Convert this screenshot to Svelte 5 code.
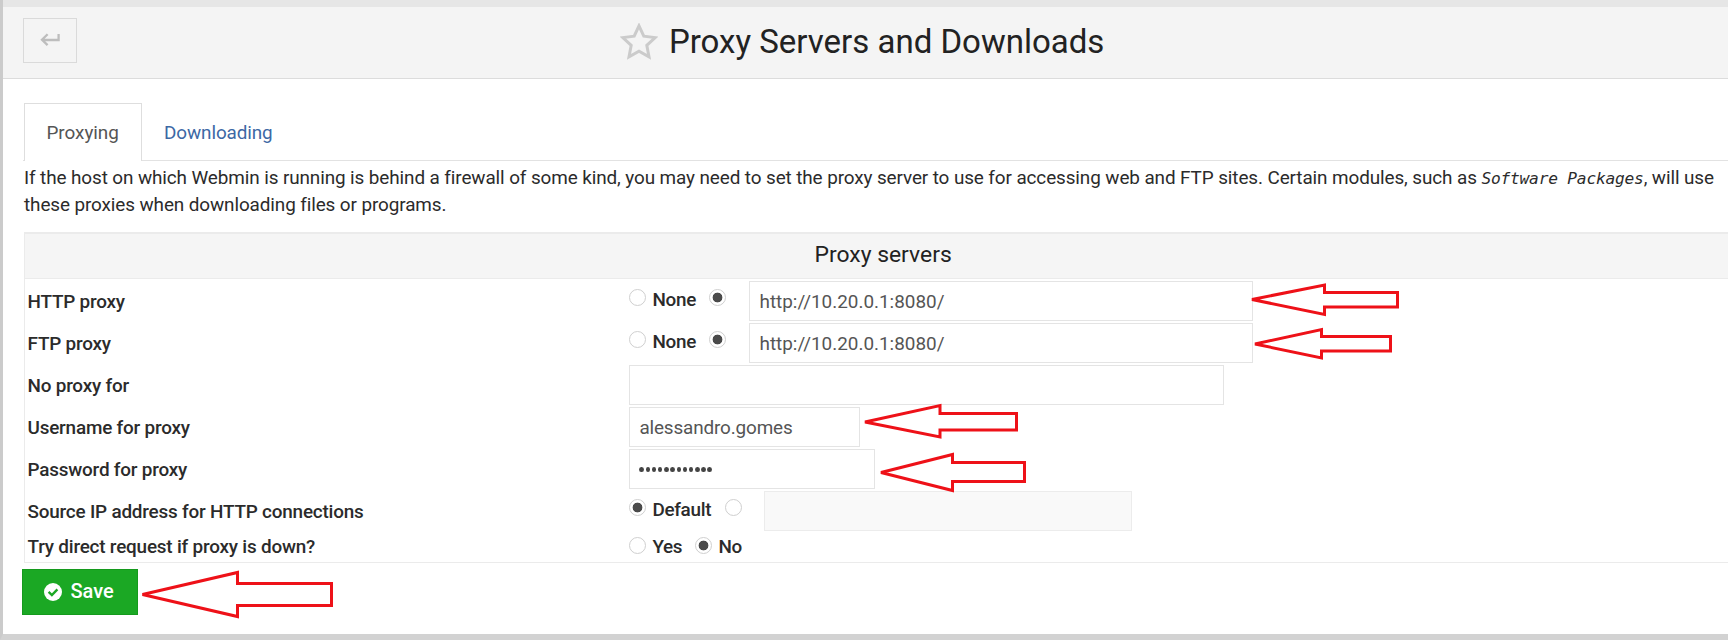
<script>
  const arrows = [
    { tip: [1252, 299.5], head: 1324.5, top: 285, bottom: 314.5, shaft: [292.5, 307], end: 1397.5 },
    { tip: [1255, 344], head: 1321.5, top: 329.5, bottom: 358, shaft: [336.5, 351], end: 1390.5 },
    { tip: [865, 422], head: 940, top: 405.5, bottom: 437, shaft: [413.5, 430], end: 1016.5 },
    { tip: [881, 472.5], head: 952.5, top: 454.5, bottom: 490.5, shaft: [462.5, 481.5], end: 1024.5 },
    { tip: [142.5, 594.5], head: 237.5, top: 572.5, bottom: 616.5, shaft: [583.5, 605.5], end: 331.5 }
  ];
  const outline = (a) =>
    `M${a.tip[0]} ${a.tip[1]}L${a.head} ${a.top}V${a.shaft[0]}H${a.end}V${a.shaft[1]}H${a.head}V${a.bottom}Z`;
  let http = $state('set');
  let ftp = $state('set');
  let source = $state('default');
  let direct = $state('no');
</script>

{#snippet radio(on, pick, label)}
  <button class="radio" class:on aria-label={label} onclick={pick}></button>
{/snippet}

<div class="page">
  <header>
    <button class="back" aria-label="Back">
      <svg width="20" height="13" viewBox="0 0 20 13"><path d="M18.6 1V7H3M7.6 1.2L2 6.8L7.6 12.2" fill="none" stroke="#bdbdbd" stroke-width="2.3" /></svg>
    </button>
    <h1>
      <svg width="38" height="37" viewBox="0 0 38 37"><path d="M19 2.8L23.8 13.2L35.2 14.6L26.8 22.4L29 33.8L19 28.2L9 33.8L11.2 22.4L2.8 14.6L14.2 13.2Z" fill="none" stroke="#cbcbcb" stroke-width="3" /></svg>
      <span>Proxy Servers and Downloads</span>
    </h1>
  </header>

  <main>
    <nav>
      <a class="tab active" href="#proxying"><span>Proxying</span></a>
      <a class="tab" href="#downloading"><span>Downloading</span></a>
    </nav>
    <p><span class="l1">If the host on which Webmin is running is behind a firewall of some kind, you may need to set the proxy server to use for accessing web and FTP sites. Certain modules, such as <em>Software Packages</em>, will use</span><br /><span class="l2">these proxies when downloading files or programs.</span></p>

    <section>
      <h2><span>Proxy servers</span></h2>
      <div class="row">
        <span class="label">HTTP proxy</span>
        {@render radio(http === 'none', () => (http = 'none'), 'None')}
        <span class="opt none">None</span>
        {@render radio(http === 'set', () => (http = 'set'), 'Address')}
        <div class="field url"><span>http://10.20.0.1:8080/</span></div>
      </div>
      <div class="row">
        <span class="label">FTP proxy</span>
        {@render radio(ftp === 'none', () => (ftp = 'none'), 'None')}
        <span class="opt none">None</span>
        {@render radio(ftp === 'set', () => (ftp = 'set'), 'Address')}
        <div class="field url"><span>http://10.20.0.1:8080/</span></div>
      </div>
      <div class="row">
        <span class="label">No proxy for</span>
        <div class="field wide"></div>
      </div>
      <div class="row">
        <span class="label">Username for proxy</span>
        <div class="field user"><span>alessandro.gomes</span></div>
      </div>
      <div class="row">
        <span class="label">Password for proxy</span>
        <div class="field pass">{#each Array(12) as _}<i></i>{/each}</div>
      </div>
      <div class="row">
        <span class="label">Source IP address for HTTP connections</span>
        {@render radio(source === 'default', () => (source = 'default'), 'Default')}
        <span class="opt default">Default</span>
        {@render radio(source === 'ip', () => (source = 'ip'), 'Address')}
        <div class="field disabled"></div>
      </div>
      <div class="row last">
        <span class="label">Try direct request if proxy is down?</span>
        {@render radio(direct === 'yes', () => (direct = 'yes'), 'Yes')}
        <span class="opt yes">Yes</span>
        {@render radio(direct === 'no', () => (direct = 'no'), 'No')}
        <span class="opt">No</span>
      </div>
    </section>

    <button class="save">
      <svg width="18" height="18" viewBox="0 0 18 18"><circle cx="9" cy="9" r="9" fill="#fff" /><path d="M4.6 8.8L7.9 12L13.4 6.4" fill="none" stroke="#1ba824" stroke-width="2.4" /></svg>
      <span>Save</span>
    </button>
  </main>

  <svg class="marks" width="1728" height="640" viewBox="0 0 1728 640">
    {#each arrows as a}<path d={outline(a)} fill="none" stroke="#ee1118" stroke-width="3" />{/each}
  </svg>
</div>

<style>
  :global(body) { background: #d3d3d3; overflow: hidden; }
  .page { position: relative; box-sizing: border-box; width: 1728px; height: 640px; border-left: 3px solid #cbcbcb; border-bottom: 6px solid #d2d2d2; background: #fff; font: 18.9px/27.5px Roboto, sans-serif; color: #2b2b2b; }
  button { padding: 0; border: 0; background: none; font: inherit; }
  header { box-sizing: border-box; height: 79px; border-top: 7px solid #e6e6e6; border-bottom: 1px solid #dcdcdc; background: #f4f4f4; display: flex; align-items: flex-start; }
  .back { box-sizing: border-box; width: 54px; height: 45px; margin: 11px 0 0 20.4px; border: 1px solid #dadada; display: flex; align-items: center; justify-content: center; }
  .back svg { margin: -3px 0 0 0; }
  h1 { margin: 14px 0 0 543px; display: flex; gap: 10.5px; font-size: 33px; line-height: 42px; font-weight: 400; color: #222; white-space: nowrap; }
  h1 svg { margin-top: 1.5px; }
  main { padding-left: 20px; }
  nav { display: flex; height: 58px; margin-top: 24px; padding-left: 0.5px; background: linear-gradient(#e2e2e2, #e2e2e2) bottom / 100% 1px no-repeat; }
  .tab { box-sizing: border-box; padding: 16px 22.5px 0; color: #3d68a5; text-decoration: none; letter-spacing: -0.1px; }
  .active { width: 118px; padding: 15px 0 0 22px; border: 1px solid #dedede; border-bottom: 0; background: #fff; color: #555; letter-spacing: -0.05px; }
  p { margin: 3px 0 8px; padding-left: 1px; height: 60px; white-space: nowrap; line-height: 27px; letter-spacing: -0.098px; }
  em { font: italic 16.2px "DejaVu Sans Mono", monospace; letter-spacing: -0.2px; }
  section { box-sizing: border-box; height: 331px; margin-left: 0.5px; border: solid #ebebeb; border-width: 2px 0 1px 1px; }
  h2 { box-sizing: border-box; height: 45px; margin: 0; padding-left: 790px; border-bottom: 1px solid #ebebeb; background: #f5f5f5; font-size: 22.9px; line-height: 42px; font-weight: 400; color: #222; }
  .row { height: 42px; display: flex; }
  .label { box-sizing: border-box; flex: none; width: 604.4px; padding: 9px 0 0 3px; font-weight: 500; white-space: nowrap; letter-spacing: -0.2px; }
  .radio { box-sizing: border-box; flex: none; width: 17px; height: 17px; margin-top: 10px; border: 1.5px solid #cfcfcf; border-radius: 50%; background: #fff; }
  .on { background: radial-gradient(circle, #4a4a4a 4.6px, #fff 5.2px); }
  .opt { box-sizing: border-box; flex: none; padding: 7px 0 0 6.5px; white-space: nowrap; font-weight: 500; letter-spacing: -0.3px; }
  .none { width: 63.1px; }
  .default { width: 79.6px; }
  .yes { width: 49px; }
  .field { box-sizing: border-box; flex: none; height: 40px; margin-top: 1.5px; padding: 6px 0 0 9.5px; border: 1px solid #e4e4e4; white-space: nowrap; color: #555; }
  .url { width: 504px; margin-left: 23px; }
  .wide { width: 595px; }
  .user { width: 231px; letter-spacing: -0.14px; }
  .pass { width: 246px; display: flex; gap: 1.7px; padding-top: 17.5px; }
  .pass i { width: 4.5px; height: 5px; border-radius: 50%; background: #444; }
  .disabled { width: 368px; margin-left: 22px; border-color: #ececec; background: #f9f9f9; }
  .last .label { padding-top: 2px; }
  .last .radio { margin-top: 6px; }
  .last .opt { padding-top: 2px; }
  .save { display: flex; align-items: center; gap: 8.5px; width: 116px; height: 46px; margin: 6px 0 0 -1px; padding-left: 21px; box-sizing: border-box; border: 1px solid #159a1d; background: #1ba824; color: #fff; font-size: 20px; font-weight: 500; }
  .marks { position: absolute; left: -3px; top: 0; pointer-events: none; }
</style>
